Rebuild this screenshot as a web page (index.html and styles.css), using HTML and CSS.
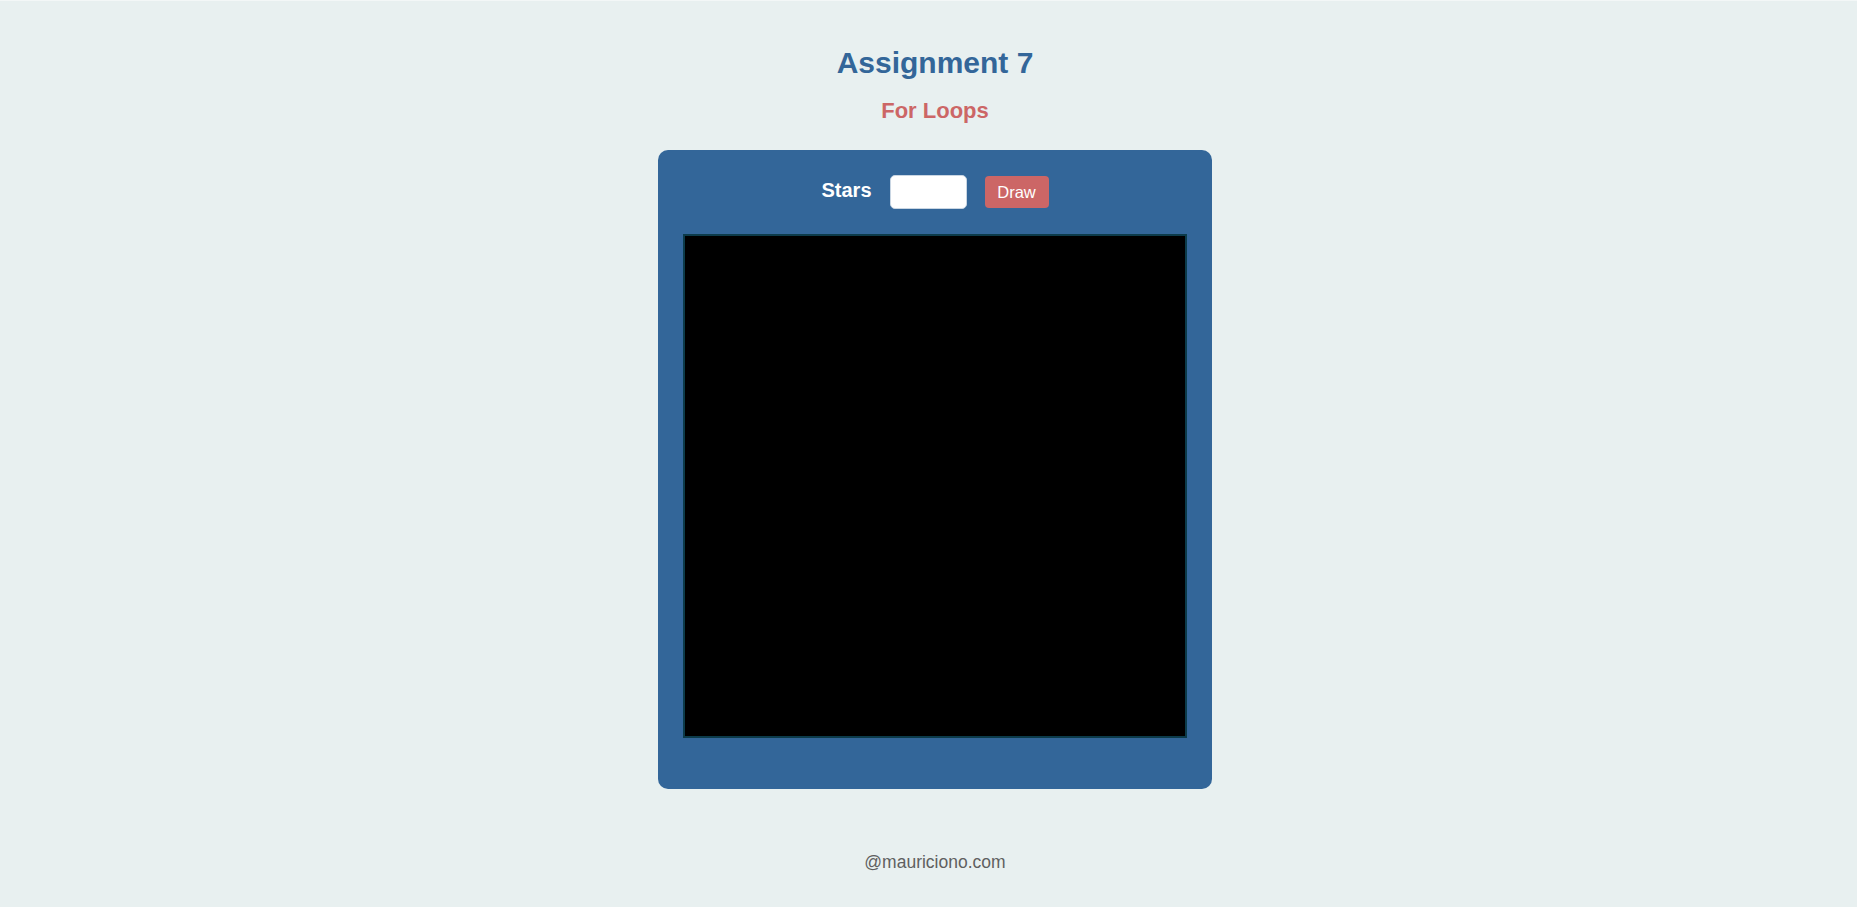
FILE: index.html
```html
<!DOCTYPE html>
<html lang="en">
<head>
<meta charset="utf-8">
<title>Assignment 7</title>
<link rel="stylesheet" href="styles.css">
</head>
<body>
  <main class="page">
    <h1 class="title">Assignment 7</h1>
    <h2 class="subtitle">For Loops</h2>
    <section class="card">
      <div class="controls">
        <label class="label" for="stars">Stars</label>
        <input class="field" id="stars" type="text">
        <button class="btn" type="button">Draw</button>
      </div>
      <canvas class="board" width="500" height="500"></canvas>
    </section>
    <footer class="footer">@mauriciono.com</footer>
  </main>
</body>
</html>
```

FILE: styles.css
```css
html, body {
  margin: 0;
  padding: 0;
}

body {
  background: #e8f0f0;
  border-top: 1px solid #f3f7f7;
  font-family: "Liberation Sans", Arial, sans-serif;
  min-height: 906px;
}

.page {
  display: flex;
  flex-direction: column;
  align-items: center;
  padding-left: 13px;
  padding-top: 44px;
}

.title {
  margin: 0;
  font-size: 30px;
  line-height: 36px;
  font-weight: bold;
  color: #336699;
}

.subtitle {
  margin: 17px 0 0;
  font-size: 22px;
  line-height: 26px;
  font-weight: bold;
  color: #cc6666;
}

.card {
  margin-top: 26px;
  width: 504px;
  padding: 25px 25px 51px;
  background: #336699;
  border-radius: 10px;
  display: flex;
  flex-direction: column;
  align-items: center;
  gap: 25px;
}

.controls {
  display: flex;
  align-items: center;
  gap: 18px;
  height: 34px;
}

.label {
  color: #ffffff;
  font-size: 20px;
  font-weight: bold;
  margin-bottom: 4px;
}

.field {
  box-sizing: border-box;
  width: 77px;
  height: 34px;
  background: #ffffff;
  border: 1px solid #c9d6e3;
  border-radius: 5px;
  padding: 0 6px;
  font-family: inherit;
  font-size: 16px;
}

.btn {
  box-sizing: border-box;
  width: 64px;
  height: 32px;
  background: #cc6666;
  color: #ffffff;
  border: none;
  border-radius: 4px;
  font-family: inherit;
  font-size: 16.5px;
  padding: 0;
}

.board {
  display: block;
  width: 500px;
  height: 500px;
  background: #000000;
  border: 2px solid #0c3b4a;
}

.footer {
  margin-top: 63px;
  font-size: 17.5px;
  line-height: 21px;
  color: #5f5f5f;
}
```
